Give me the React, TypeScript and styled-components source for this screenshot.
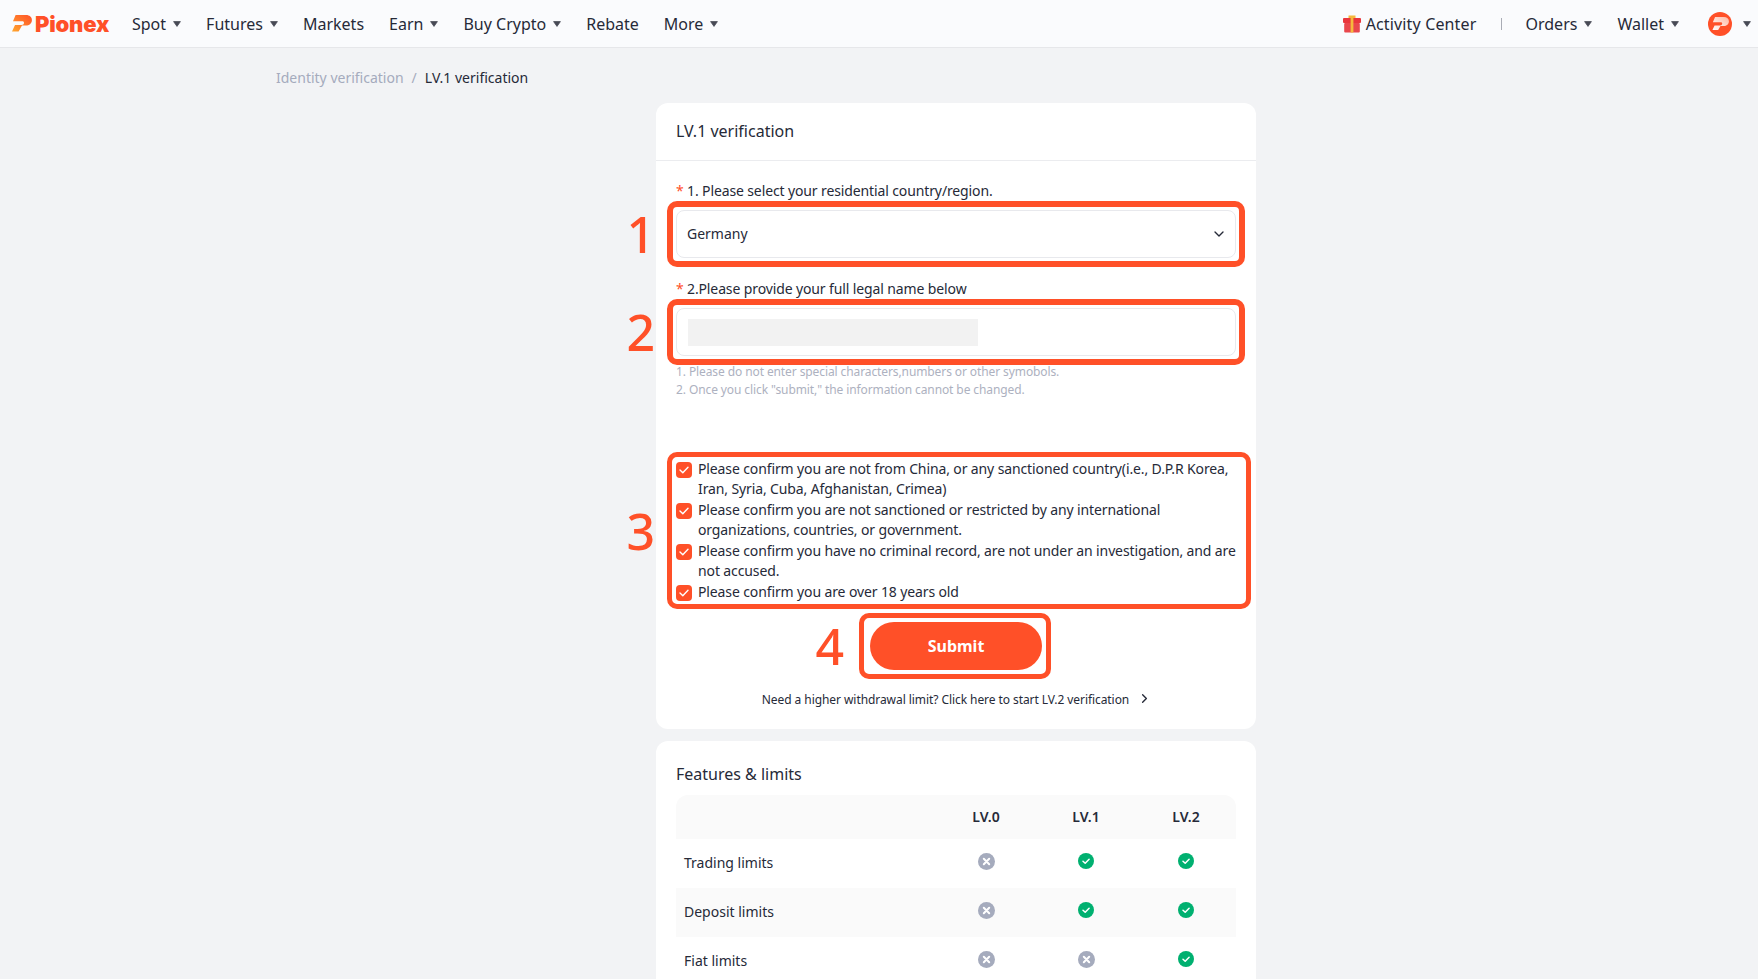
import React from 'react';
import styled, { createGlobalStyle } from 'styled-components';
import { ChevronDown, ChevronRight } from 'lucide-react';

const FONT = `"Noto Sans", "Open Sans", Arial, sans-serif`;
const RED = '#ff5028';

const GlobalStyle = createGlobalStyle`
  html, body {
    margin: 0;
    height: 100%;
    overflow: hidden;
    background: #f2f3f5;
  }
  body {
    font-family: ${FONT};
    color: #262a38;
  }
  * { box-sizing: border-box; }
`;

const Caret = () => (
  <CaretSvg viewBox="0 0 8 6">
    <path d="M0.6 0.6h6.8L4 5.4z" fill="#474a55" stroke="#474a55" strokeWidth="0.8" strokeLinejoin="round" />
  </CaretSvg>
);

const PMark = ({ id, from, to, size = 20 }: { id: string; from: string; to: string; size?: number }) => (
  <svg width={size} height={size * 0.82} viewBox="0 0 20 16.4">
    <defs>
      <linearGradient id={id} x1="0" y1="1" x2="1" y2="0">
        <stop offset="0" stopColor={from} />
        <stop offset="1" stopColor={to} />
      </linearGradient>
    </defs>
    <path
      d="M3.6 0H14C17.6 0 20 2.2 19.9 5.2C19.8 8.4 17.2 10.6 14 10.6H10L6.6 16.4H0L3 10H9.6C11 10 11.9 9 12 8C12 7 11.4 6.3 10.4 6.3H1Z"
      fill={`url(#${id})`}
    />
  </svg>
);

const Gift = () => (
  <svg width="18" height="18" viewBox="0 0 18 18">
    <path d="M5.5 0.5h7v3.5h-7z" fill="#f5b93c" />
    <rect x="0" y="3" width="18" height="5" rx="1" fill="#e9363c" />
    <rect x="1.2" y="8" width="15.6" height="9.5" rx="1" fill="#e9474c" />
    <rect x="7.6" y="2" width="2.8" height="15.5" fill="#f5b93c" />
  </svg>
);

const Cross = () => (
  <svg width="17" height="17" viewBox="0 0 17 17">
    <circle cx="8.5" cy="8.5" r="8.5" fill="#a5abbd" />
    <path d="M5.8 5.8l5.4 5.4M11.2 5.8l-5.4 5.4" stroke="#fff" strokeWidth="2" strokeLinecap="round" />
  </svg>
);

const Tick = () => (
  <svg width="16" height="16" viewBox="0 0 16 16">
    <circle cx="8" cy="8" r="8" fill="#00b070" />
    <path d="M5 8.2l2.2 2.1L11.1 6.2" fill="none" stroke="#fff" strokeWidth="1.5" strokeLinecap="round" strokeLinejoin="round" />
  </svg>
);

const CheckMark = () => (
  <svg width="10" height="8" viewBox="0 0 10 8">
    <path d="M1 4l2.8 2.8L9 1.2" fill="none" stroke="#fff" strokeWidth="1.4" strokeLinecap="round" strokeLinejoin="round" />
  </svg>
);

const leftNav = [
  { label: 'Spot', caret: true },
  { label: 'Futures', caret: true },
  { label: 'Markets' },
  { label: 'Earn', caret: true },
  { label: 'Buy Crypto', caret: true },
  { label: 'Rebate' },
  { label: 'More', caret: true },
];

const confirmations = [
  'Please confirm you are not from China, or any sanctioned country(i.e., D.P.R Korea, Iran, Syria, Cuba, Afghanistan, Crimea)',
  'Please confirm you are not sanctioned or restricted by any international organizations, countries, or government.',
  'Please confirm you have no criminal record, are not under an investigation, and are not accused.',
  'Please confirm you are over 18 years old',
];

const limits = [
  { name: 'Trading limits', levels: [false, true, true] },
  { name: 'Deposit limits', levels: [false, true, true] },
  { name: 'Fiat limits', levels: [false, false, true] },
];

export default function App() {
  return (
    <Page>
      <GlobalStyle />
      <TopBar>
        <Logo>
          <PMark id="logo-mark" from="#ffa62e" to="#ff5028" />
          <LogoText>Pionex</LogoText>
        </Logo>
        <NavLinks>
          {leftNav.map(item => (
            <NavItem key={item.label}>
              {item.label}
              {item.caret && <Caret />}
            </NavItem>
          ))}
        </NavLinks>
        <RightNav>
          <ActivityLink>
            <Gift />
            Activity Center
          </ActivityLink>
          <Separator />
          <NavItem>Orders<Caret /></NavItem>
          <WalletItem>Wallet<Caret /></WalletItem>
          <AvatarItem>
            <AvatarCircle>
              <PMark id="avatar-mark" from="#ffffff" to="#ffb9a4" size={17} />
            </AvatarCircle>
            <Caret />
          </AvatarItem>
        </RightNav>
      </TopBar>

      <Content>
        <Breadcrumb>
          <Crumb>Identity verification</Crumb>
          <Crumb>/</Crumb>
          <CrumbCurrent>LV.1 verification</CrumbCurrent>
        </Breadcrumb>

        <Column>
          <Card>
            <CardHeader>LV.1 verification</CardHeader>
            <Form>
              <FieldLabel><Star>*</Star>1. Please select your residential country/region.</FieldLabel>
              <Control>
                <SelectedValue>Germany</SelectedValue>
                <ChevronDown size={16} strokeWidth={2} color="#262a38" />
                <Highlight $inset="-10px" $thick>
                  <Digit $gap={18}>1</Digit>
                </Highlight>
              </Control>

              <FieldLabel $spaced><Star>*</Star>2.Please provide your full legal name below</FieldLabel>
              <Control>
                <Redacted />
                <Highlight $inset="-10px" $thick>
                  <Digit $gap={18}>2</Digit>
                </Highlight>
              </Control>
              <Hints>
                <div>1. Please do not enter special characters,numbers or other symobols.</div>
                <div>2. Once you click "submit," the information cannot be changed.</div>
              </Hints>

              <Confirmations>
                {confirmations.map(text => (
                  <Confirmation key={text}>
                    <CheckBox><CheckMark /></CheckBox>
                    <span>{text}</span>
                  </Confirmation>
                ))}
                <Highlight $inset="-7px -15px -7px -9px">
                  <Digit $gap={17}>3</Digit>
                </Highlight>
              </Confirmations>

              <SubmitButton>
                Submit
                <Highlight $inset="-9px -9px -9px -11px">
                  <Digit $gap={20}>4</Digit>
                </Highlight>
              </SubmitButton>

              <UpgradeLink>
                Need a higher withdrawal limit? Click here to start LV.2 verification
                <ChevronRight size={15} strokeWidth={2.2} color="#262a38" />
              </UpgradeLink>
            </Form>
          </Card>

          <Card>
            <FeaturesTitle>Features &amp; limits</FeaturesTitle>
            <LimitsTable>
              <HeadRow>
                <span />
                <HeadCell>LV.0</HeadCell>
                <HeadCell>LV.1</HeadCell>
                <HeadCell>LV.2</HeadCell>
              </HeadRow>
              {limits.map((row, i) => (
                <LimitRow key={row.name} $striped={i % 2 === 1}>
                  <RowName>{row.name}</RowName>
                  {row.levels.map((ok, j) => (
                    <IconCell key={j}>{ok ? <Tick /> : <Cross />}</IconCell>
                  ))}
                </LimitRow>
              ))}
            </LimitsTable>
          </Card>
        </Column>
      </Content>
    </Page>
  );
}

const Page = styled.div`
  width: 100%;
  min-height: 100vh;
  background: #f2f3f5;
`;

const TopBar = styled.header`
  display: flex;
  align-items: center;
  height: 48px;
  padding: 0 7px 0 12px;
  background: #fafbfd;
  border-bottom: 1px solid #e6e7ea;
`;

const Logo = styled.div`
  display: flex;
  align-items: center;
  gap: 3px;
  width: 120px;
`;

const LogoText = styled.span`
  font-family: Inter, ${FONT};
  font-weight: 900;
  font-size: 22px;
  line-height: 1;
  letter-spacing: -0.2px;
  color: ${RED};
`;

const NavLinks = styled.nav`
  display: flex;
  align-items: center;
  gap: 25px;
`;

const NavItem = styled.div`
  display: flex;
  align-items: center;
  gap: 7px;
  font-size: 16px;
  line-height: 22px;
  color: #262a38;
`;

const WalletItem = styled(NavItem)`
  margin-right: 4px;
`;

const AvatarItem = styled(NavItem)`
  gap: 11px;
`;

const CaretSvg = styled.svg`
  width: 8px;
  height: 6px;
  flex-shrink: 0;
`;

const RightNav = styled.div`
  display: flex;
  align-items: center;
  gap: 25px;
  margin-left: auto;
`;

const ActivityLink = styled(NavItem)`
  gap: 5px;
  letter-spacing: 0.15px;
`;

const Separator = styled.div`
  width: 1px;
  height: 12px;
  margin-right: -2px;
  background: #a9acb5;
`;

const AvatarCircle = styled.div`
  display: flex;
  align-items: center;
  justify-content: center;
  width: 24px;
  height: 24px;
  border-radius: 50%;
  background: ${RED};
`;

const Content = styled.main`
  width: 1206px;
  margin: 0 auto;
`;

const Breadcrumb = styled.div`
  display: flex;
  align-items: center;
  gap: 8px;
  padding: 19px 0 14px;
  font-size: 14px;
  line-height: 22px;
`;

const Crumb = styled.span`
  color: #a5abbd;
`;

const CrumbCurrent = styled.span`
  color: #262a38;
`;

const Column = styled.div`
  display: flex;
  flex-direction: column;
  gap: 12px;
  width: 600px;
  margin-left: 380px;
`;

const Card = styled.section`
  background: #fff;
  border-radius: 12px;
  padding-bottom: 20px;
`;

const CardHeader = styled.div`
  display: flex;
  align-items: center;
  height: 58px;
  padding: 0 20px 2px;
  border-bottom: 1px solid #ebecef;
  font-size: 16px;
`;

const Form = styled.div`
  display: flex;
  flex-direction: column;
  padding: 20px 20px 0;
`;

const FieldLabel = styled.div<{ $spaced?: boolean }>`
  margin-top: ${p => (p.$spaced ? '21px' : '0')};
  margin-bottom: 9px;
  font-size: 14px;
  line-height: 20px;
  letter-spacing: -0.12px;
`;

const Star = styled.span`
  display: inline-block;
  width: 11px;
  color: ${RED};
`;

const Control = styled.div`
  position: relative;
  display: flex;
  align-items: center;
  justify-content: space-between;
  height: 48px;
  padding: 0 8px 0 11px;
  border: 1px solid #e8e9ed;
  border-radius: 8px;
  font-size: 14px;
`;

const SelectedValue = styled.span`
  margin: -2px 0 0 -1px;
`;

const Redacted = styled.div`
  width: 290px;
  height: 27px;
  background: #f2f2f2;
`;

const Highlight = styled.div<{ $inset: string; $thick?: boolean }>`
  position: absolute;
  inset: ${p => p.$inset};
  border: ${p => (p.$thick ? 6 : 5)}px solid ${RED};
  border-radius: 10px;
  pointer-events: none;
`;

const Digit = styled.span<{ $gap: number }>`
  position: absolute;
  top: 50%;
  right: calc(100% + ${p => p.$gap}px);
  transform: translateY(-50%);
  font-family: ${FONT};
  font-size: 50px;
  font-weight: 500;
  line-height: 1;
  color: ${RED};
`;

const Hints = styled.div`
  margin-top: 7px;
  font-size: 12px;
  line-height: 18px;
  letter-spacing: -0.1px;
  color: #adb1c0;
`;

const Confirmations = styled.div`
  position: relative;
  display: flex;
  flex-direction: column;
  gap: 1px;
  margin-top: 60px;
`;

const Confirmation = styled.div`
  display: flex;
  align-items: flex-start;
  gap: 6px;
  margin-right: -4px;
  font-size: 14px;
  line-height: 20px;
  letter-spacing: -0.12px;
`;

const CheckBox = styled.div`
  display: flex;
  align-items: center;
  justify-content: center;
  flex-shrink: 0;
  width: 16px;
  height: 16px;
  margin-top: 3px;
  border-radius: 4px;
  background: ${RED};
`;

const SubmitButton = styled.div`
  position: relative;
  display: flex;
  align-items: center;
  justify-content: center;
  align-self: center;
  width: 172px;
  height: 48px;
  margin-top: 20px;
  border-radius: 24px;
  background: ${RED};
  color: #fff;
  font-size: 16px;
  font-weight: 700;
`;

const UpgradeLink = styled.div`
  display: flex;
  align-items: center;
  justify-content: center;
  gap: 8px;
  margin-top: 21px;
  padding-left: 2px;
  font-size: 12px;
  line-height: 18px;
  letter-spacing: -0.07px;

  svg { margin-top: -3px; }
`;

const FeaturesTitle = styled.div`
  padding: 22px 20px 10px;
  font-size: 16px;
  line-height: 22px;
`;

const LimitsTable = styled.div`
  margin: 0 20px;
`;

const HeadRow = styled.div`
  display: grid;
  grid-template-columns: 1fr 100px 100px 100px;
  align-items: center;
  height: 44px;
  padding-bottom: 2px;
  border-radius: 12px 12px 0 0;
  background: #fafafa;
`;

const HeadCell = styled.div`
  text-align: center;
  font-size: 14px;
  font-weight: 600;
`;

const LimitRow = styled.div<{ $striped: boolean }>`
  display: grid;
  grid-template-columns: 1fr 100px 100px 100px;
  align-items: center;
  height: 49px;
  background: ${p => (p.$striped ? '#fafafa' : '#fff')};
`;

const RowName = styled.div`
  margin-top: -2px;
  padding-left: 8px;
  font-size: 14px;
  line-height: 20px;
`;

const IconCell = styled.div`
  display: flex;
  justify-content: center;
  margin-top: -5px;

  svg { display: block; }
`;
